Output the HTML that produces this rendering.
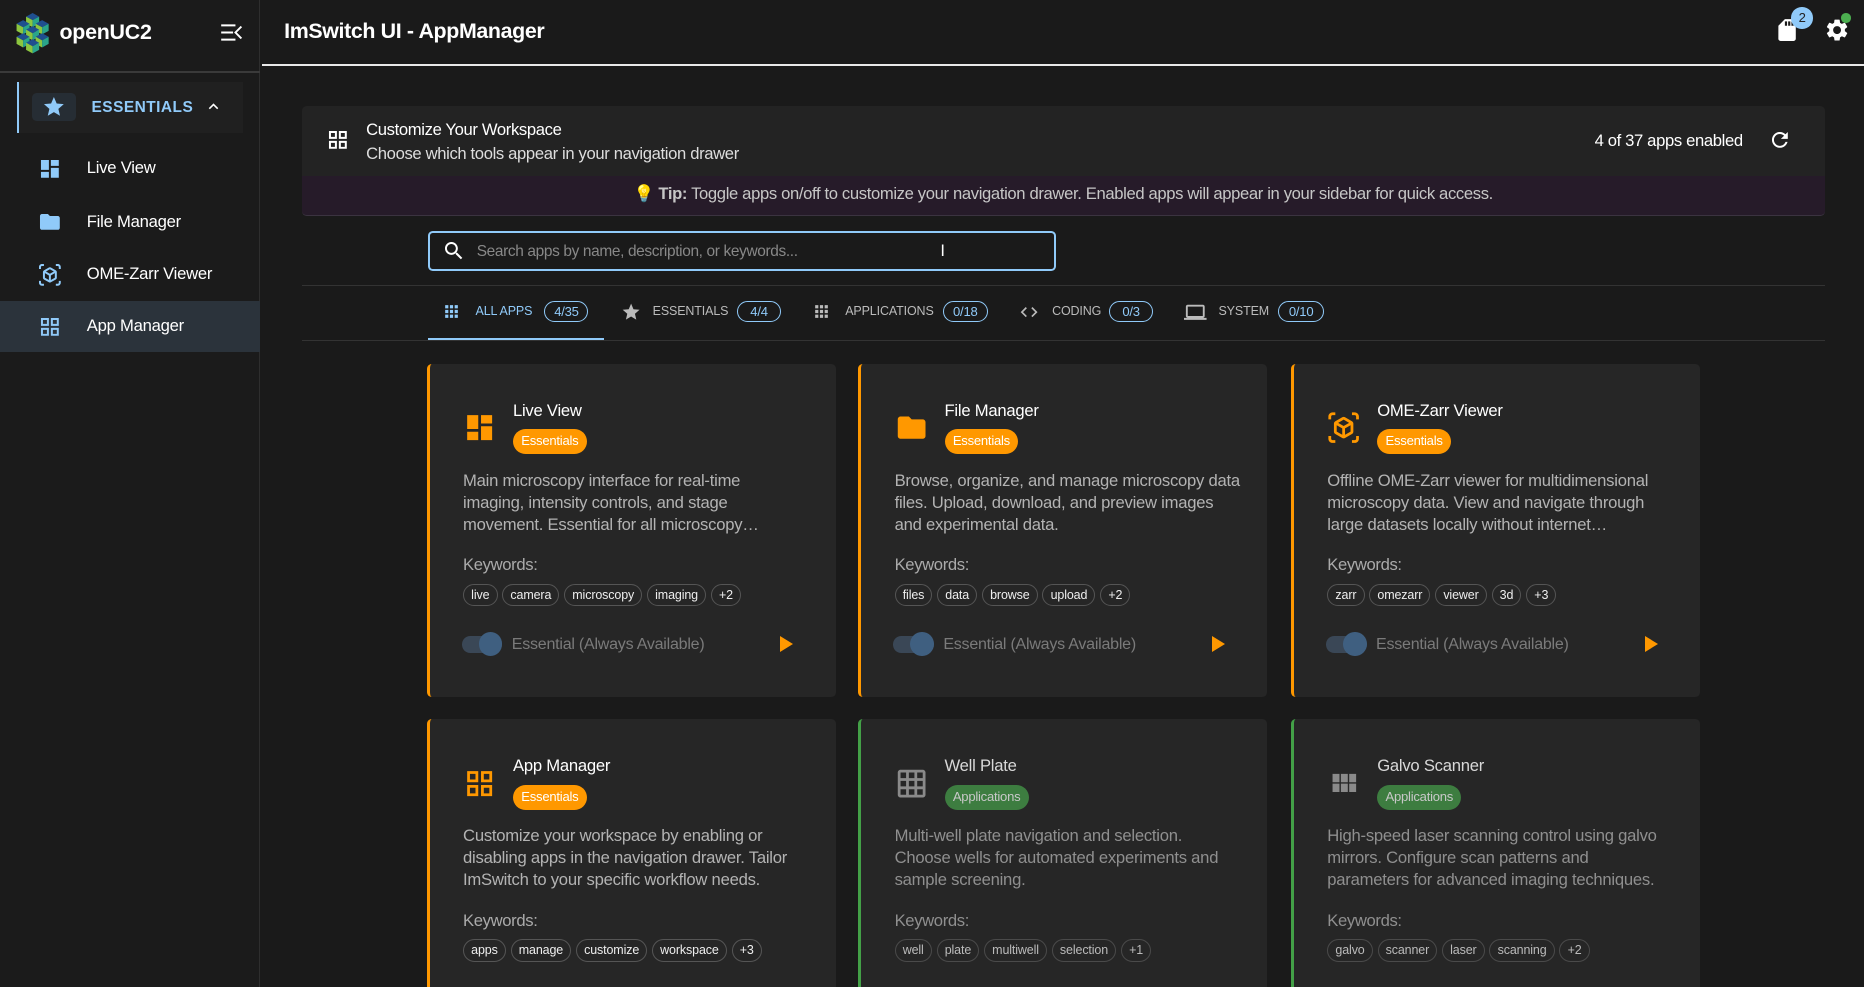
<!DOCTYPE html>
<html><head><meta charset="utf-8">
<style>
*{box-sizing:border-box;margin:0;padding:0}
html,body{width:1864px;height:987px;overflow:hidden;background:#1a1a1a}
#root{zoom:1.18878;width:1568px;height:830px;position:relative;font-family:"Liberation Sans",sans-serif;color:#fff;background:#1a1a1a;overflow:hidden;letter-spacing:-0.2px}
.abs{position:absolute}
svg{display:block}
.side{left:0;top:0;width:219px;height:830px;background:#1b1b1b;border-right:1px solid #2e2e2e}
.nav{position:absolute;left:0;width:219px;height:44px}
.nav svg{position:absolute;left:32px;top:13px}
.nav span{position:absolute;left:73px;top:14px;font-size:14px;color:#fff}
.tab{position:absolute;top:253px;font-size:10.5px;color:#bbb;text-transform:uppercase;letter-spacing:-0.1px}
.chip{position:absolute;top:253px;height:18px;border:1px solid #90caf9;border-radius:9px;font-size:11px;color:#90caf9;text-align:center;line-height:16px}
.card{position:absolute;width:344px;height:280px;background:#262626;border-radius:4px;border-left:3px solid #ff9800}
.card .ic{position:absolute;left:28px;top:40px}
.card .t{position:absolute;left:70px;top:31px;font-size:14px;color:#fff}
.card .cat{position:absolute;left:70px;top:55px;height:21px;border-radius:11px;background:#ff9800;color:#fff;font-size:11px;line-height:21px;padding:0 7px}
.card .d{position:absolute;left:28px;top:89px;font-size:14px;line-height:18.5px;color:#b3b3b3;letter-spacing:-0.2px;white-space:nowrap}
.card .k{position:absolute;left:28px;top:161px;font-size:14px;color:#aaa;letter-spacing:-0.3px}
.card .kws{position:absolute;left:28px;top:185px;display:flex;gap:4px}
.card .kws span{height:19px;border:1px solid #555;border-radius:10px;font-size:10.5px;line-height:17px;padding:0 6px;color:#eee;letter-spacing:-0.1px}
.card .tg{position:absolute;left:27px;top:229px;width:34px;height:14px;border-radius:7px;background:#3a4756}
.card .kn{position:absolute;left:41px;top:226px;width:20px;height:20px;border-radius:50%;background:#3f5f80}
.card .al{position:absolute;left:69px;top:228px;font-size:13.5px;color:#7a7a7a;letter-spacing:-0.2px}
.card .pl{position:absolute;left:295px;top:229px;width:0;height:0;border-left:11px solid #ff9800;border-top:7px solid transparent;border-bottom:7px solid transparent}
.card.g{border-left-color:#43a047}
.card.g .cat{background:#3d7d40;color:#c8c8c8}
.card.g .t{color:#d8d8d8}
.card.g .d,.card.g .k{color:#8f8f8f}
.card.g .kws span{color:#bbb;border-color:#4a4a4a}
</style></head><body><div id="root">

<div class="abs side">
  <svg class="abs" style="left:11px;top:11px" width="33" height="35" viewBox="0 0 33 35">
    <defs>
      <g id="cb"><polygon points="5.5,0 11,3 5.5,6 0,3" fill="#1f4f8f"/><polygon points="0,3 5.5,6 5.5,12 0,9" fill="#8cc63f"/><polygon points="11,3 5.5,6 5.5,12 11,9" fill="#2aa58a"/></g>
    </defs>
    <use href="#cb" x="11" y="0"/><use href="#cb" x="3" y="6"/><use href="#cb" x="19" y="6"/><use href="#cb" x="11" y="11"/><use href="#cb" x="3" y="17"/><use href="#cb" x="19" y="17"/><use href="#cb" x="11" y="22"/>
  </svg>
  <div class="abs" style="left:50px;top:17px;font-size:18px;font-weight:bold">openUC2</div>
  <svg class="abs" style="left:185px;top:19px" width="20" height="16" viewBox="0 0 20 16"><path d="M1 2h12M1 8h10M1 14h12M18 3l-5 5 5 5" stroke="#fff" stroke-width="1.6" fill="none"/></svg>
  <div class="abs" style="left:0;top:60px;width:219px;height:1px;background:#3a3a3a"></div>
  <div class="abs" style="left:14px;top:69px;width:190px;height:43px;background:#202020;border-left:2px solid #90caf9"></div>
  <div class="abs" style="left:27px;top:78px;width:37px;height:24px;background:#262d34;border-radius:4px"></div>
  <svg class="abs" style="left:35px;top:80px" width="20" height="20" viewBox="0 0 24 24"><path fill="#90caf9" d="M12 17.27L18.18 21l-1.64-7.03L22 9.24l-7.19-.61L12 2 9.19 8.63 2 9.24l5.46 4.73L5.820 21z"/></svg>
  <div class="abs" style="left:77px;top:83px;font-size:13px;font-weight:bold;color:#90caf9;letter-spacing:.4px">ESSENTIALS</div>
  <svg class="abs" style="left:172px;top:82px" width="16" height="16" viewBox="0 0 24 24"><path fill="#fff" d="M7.41 15.41L12 10.83l4.59 4.58L18 14l-6-6-6 6z"/></svg>

  <div class="nav" style="top:119px"><svg width="20" height="20" viewBox="0 0 24 24"><path fill="#90caf9" d="M3 13h8V3H3v10zm0 8h8v-6H3v6zm10 0h8V11h-8v10zm0-18v6h8V3h-8z"/></svg><span>Live View</span></div>
  <div class="nav" style="top:164px"><svg width="20" height="20" viewBox="0 0 24 24"><path fill="#90caf9" d="M10 4H4c-1.1 0-2 .9-2 2v12c0 1.1.9 2 2 2h16c1.1 0 2-.9 2-2V8c0-1.1-.9-2-2-2h-8l-2-2z"/></svg><span>File Manager</span></div>
  <div class="nav" style="top:208px"><svg width="20" height="20" viewBox="0 0 24 24"><path fill="#90caf9" d="M3 4c0-.55.45-1 1-1h2V1H4C2.34 1 1 2.34 1 4v2h2V4zm0 16v-2H1v2c0 1.66 1.34 3 3 3h2v-2H4c-.55 0-1-.45-1-1zM20 1h-2v2h2c.55 0 1 .45 1 1v2h2V4c0-1.66-1.34-3-3-3zm1 19c0 .55-.45 1-1 1h-2v2h2c1.66 0 3-1.34 3-3v-2h-2v2zm-2-5.13V9.13c0-.72-.38-1.38-1-1.73l-5-2.88c-.31-.18-.65-.27-1-.27s-.69.09-1 .27L6 7.39c-.62.36-1 1.02-1 1.74v5.74c0 .72.38 1.38 1 1.73l5 2.88c.31.18.65.27 1 .27s.69-.09 1-.27l5-2.88c.62-.35 1-1.01 1-1.73zm-8 2.3-4-2.3v-4.63l4 2.33v4.6zm1-6.33L8.04 8.53 12 6.25l3.96 2.28L12 10.84zm5 4.03-4 2.3v-4.6l4-2.33v4.63z"/></svg><span>OME-Zarr Viewer</span></div>
  <div class="nav" style="top:253px;height:43px;background:#2b333b"><svg width="20" height="20" viewBox="0 0 24 24" style="top:12px"><path fill="#90caf9" d="M3 3v8h8V3H3zm6 6H5V5h4v4zm-6 4v8h8v-8H3zm6 6H5v-4h4v4zm4-16v8h8V3h-8zm6 6h-4V5h4v4zm-6 4v8h8v-8h-8zm6 6h-4v-4h4v4z"/></svg><span style="top:13px">App Manager</span></div>
</div>

<div class="abs" style="left:239px;top:16px;font-size:18px;font-weight:bold;letter-spacing:-0.3px">ImSwitch UI - AppManager</div>
<svg class="abs" style="left:1492px;top:14px" width="22" height="22" viewBox="0 0 24 24"><path fill="#fff" d="M18 2h-8L4.02 8 4 20c0 1.1.9 2 2 2h12c1.1 0 2-.9 2-2V4c0-1.1-.9-2-2-2zm-6 6h-2V4h2v4zm3 0h-2V4h2v4zm3 0h-2V4h2v4z"/></svg>
<div class="abs" style="left:1507px;top:6px;width:18px;height:18px;border-radius:50%;background:#90caf9;color:#222;font-size:11px;text-align:center;line-height:18px">2</div>
<svg class="abs" style="left:1534px;top:14px" width="22" height="22" viewBox="0 0 24 24"><path fill="#fff" d="M19.14 12.94c.04-.3.06-.61.06-.94 0-.32-.02-.64-.07-.94l2.03-1.58c.18-.14.23-.41.12-.61l-1.92-3.32c-.12-.22-.37-.29-.59-.22l-2.39.96c-.5-.38-1.03-.7-1.62-.94l-.36-2.54c-.04-.24-.24-.41-.48-.41h-3.84c-.24 0-.43.17-.47.41l-.36 2.54c-.59.24-1.13.57-1.62.94l-2.39-.96c-.22-.08-.47 0-.59.22L2.74 8.87c-.12.21-.08.47.12.61l2.03 1.58c-.05.3-.09.63-.09.94s.02.64.07.94l-2.03 1.58c-.18.14-.23.41-.12.61l1.92 3.32c.12.22.37.29.59.22l2.39-.96c.5.38 1.03.7 1.62.94l.36 2.54c.05.24.24.41.48.41h3.84c.24 0 .44-.17.47-.41l.36-2.54c.59-.24 1.13-.56 1.62-.94l2.39.96c.22.08.47 0 .59-.22l1.92-3.32c.12-.22.07-.47-.12-.61l-2.01-1.58zM12 15.6c-1.98 0-3.6-1.62-3.6-3.6s1.62-3.6 3.6-3.6 3.6 1.62 3.6 3.6-1.62 3.6-3.6 3.6z"/></svg>
<div class="abs" style="left:1549px;top:11px;width:8px;height:8px;border-radius:50%;background:#4caf50"></div>
<div class="abs" style="left:220px;top:54px;width:1348px;height:1.5px;background:#e8e8e8"></div>

<div class="abs" style="left:254px;top:89px;width:1281px;height:59px;background:#232323;border-radius:4px 4px 0 0"></div>
<svg class="abs" style="left:274px;top:108px" width="20" height="20" viewBox="0 0 24 24"><path fill="#fff" d="M3 3v8h8V3H3zm6 6H5V5h4v4zm-6 4v8h8v-8H3zm6 6H5v-4h4v4zm4-16v8h8V3h-8zm6 6h-4V5h4v4zm-6 4v8h8v-8h-8zm6 6h-4v-4h4v4z"/></svg>
<div class="abs" style="left:308px;top:101px;font-size:14px;letter-spacing:-0.3px">Customize Your Workspace</div>
<div class="abs" style="left:308px;top:121px;font-size:14px;color:#ddd;letter-spacing:-0.3px">Choose which tools appear in your navigation drawer</div>
<div class="abs" style="left:1466px;top:110px;font-size:14px;transform:translateX(-100%);white-space:nowrap;letter-spacing:-0.3px">4 of 37 apps enabled</div>
<svg class="abs" style="left:1487px;top:108px" width="20" height="20" viewBox="0 0 24 24"><path fill="#fff" d="M17.65 6.35C16.2 4.9 14.21 4 12 4c-4.42 0-7.99 3.58-7.99 8s3.57 8 7.99 8c3.73 0 6.84-2.55 7.73-6h-2.08c-.82 2.33-3.04 4-5.65 4-3.31 0-6-2.69-6-6s2.69-6 6-6c1.66 0 3.14.69 4.22 1.78L13 11h7V4l-2.35 2.35z"/></svg>
<div class="abs" style="left:254px;top:148px;width:1281px;height:34px;background:#261b29;border-bottom:1px solid #3b3340;border-radius:0 0 4px 4px"></div>
<div class="abs" style="left:254px;top:155px;width:1281px;text-align:center;font-size:14px;color:#c6c6c6;letter-spacing:-0.3px">💡 <b>Tip:</b> Toggle apps on/off to customize your navigation drawer. Enabled apps will appear in your sidebar for quick access.</div>

<div class="abs" style="left:360px;top:194px;width:528px;height:34px;border:2px solid #90caf9;border-radius:4px"></div>
<svg class="abs" style="left:372px;top:201px" width="20" height="20" viewBox="0 0 24 24"><path fill="#fff" d="M15.5 14h-.79l-.28-.27C15.41 12.59 16 11.11 16 9.5 16 5.91 13.09 3 9.5 3S3 5.91 3 9.5 5.91 16 9.5 16c1.61 0 3.09-.59 4.23-1.57l.27.28v.79l5 4.99L20.49 19l-4.99-5zm-6 0C7.01 14 5 11.99 5 9.5S7.01 5 9.5 5 14 7.01 14 9.5 11.99 14 9.5 14z"/></svg>
<div class="abs" style="left:401px;top:204px;font-size:13px;color:#888;letter-spacing:-0.3px">Search apps by name, description, or keywords...</div>
<div class="abs" style="left:791px;top:203px;font-size:14px;color:#fff">I</div>

<div class="abs" style="left:254px;top:240px;width:1281px;height:1px;background:#333"></div>
<div class="abs" style="left:254px;top:286px;width:1281px;height:1px;background:#333"></div>
<div class="abs" style="left:360px;top:284px;width:148px;height:2px;background:#90caf9"></div>

<svg class="abs" style="left:372px;top:254px" width="16" height="16" viewBox="0 0 24 24"><path fill="#90caf9" d="M4 8h4V4H4v4zm6 12h4v-4h-4v4zm-6 0h4v-4H4v4zm0-6h4v-4H4v4zm6 0h4v-4h-4v4zm6-10v4h4V4h-4zm-6 4h4V4h-4v4zm6 6h4v-4h-4v4zm0 6h4v-4h-4v4z"/></svg>
<div class="tab" style="left:400px;top:256px;color:#90caf9">All Apps</div><div class="chip" style="left:458px;width:37px">4/35</div>
<svg class="abs" style="left:522px;top:254px" width="17" height="17" viewBox="0 0 24 24"><path fill="#bbb" d="M12 17.27L18.18 21l-1.64-7.03L22 9.24l-7.19-.61L12 2 9.19 8.63 2 9.24l5.46 4.73L5.82 21z"/></svg>
<div class="tab" style="left:549px;top:256px">Essentials</div><div class="chip" style="left:620px;width:37px">4/4</div>
<svg class="abs" style="left:683px;top:254px" width="16" height="16" viewBox="0 0 24 24"><path fill="#bbb" d="M4 8h4V4H4v4zm6 12h4v-4h-4v4zm-6 0h4v-4H4v4zm0-6h4v-4H4v4zm6 0h4v-4h-4v4zm6-10v4h4V4h-4zm-6 4h4V4h-4v4zm6 6h4v-4h-4v4zm0 6h4v-4h-4v4z"/></svg>
<div class="tab" style="left:711px;top:256px">Applications</div><div class="chip" style="left:793px;width:38px">0/18</div>
<svg class="abs" style="left:857px;top:254px" width="17" height="17" viewBox="0 0 24 24"><path fill="#bbb" d="M9.4 16.6L4.8 12l4.6-4.6L8 6l-6 6 6 6 1.4-1.4zm5.2 0l4.6-4.6-4.6-4.6L16 6l6 6-6 6-1.4-1.4z"/></svg>
<div class="tab" style="left:885px;top:256px">Coding</div><div class="chip" style="left:933px;width:37px">0/3</div>
<svg class="abs" style="left:996px;top:253px" width="19" height="19" viewBox="0 0 24 24"><path fill="#bbb" d="M20 18c1.1 0 1.99-.9 1.99-2L22 6c0-1.1-.9-2-2-2H4c-1.1 0-2 .9-2 2v10c0 1.1.9 2 2 2H0v2h24v-2h-4zM4 6h16v10H4V6z"/></svg>
<div class="tab" style="left:1025px;top:256px">System</div><div class="chip" style="left:1075px;width:39px">0/10</div>

<!-- Row 1 -->
<div class="card" style="left:359px;top:306px">
  <svg class="ic" width="28" height="28" viewBox="0 0 24 24"><path fill="#ff9800" d="M3 13h8V3H3v10zm0 8h8v-6H3v6zm10 0h8V11h-8v10zm0-18v6h8V3h-8z"/></svg>
  <div class="t">Live View</div><div class="cat">Essentials</div>
  <div class="d">Main microscopy interface for real-time<br>imaging, intensity controls, and stage<br>movement. Essential for all microscopy…</div>
  <div class="k">Keywords:</div>
  <div class="kws"><span>live</span><span>camera</span><span>microscopy</span><span>imaging</span><span>+2</span></div>
  <div class="tg"></div><div class="kn"></div><div class="al">Essential (Always Available)</div><div class="pl"></div>
</div>
<div class="card" style="left:722px;top:306px">
  <svg class="ic" width="28" height="28" viewBox="0 0 24 24"><path fill="#ff9800" d="M10 4H4c-1.1 0-2 .9-2 2v12c0 1.1.9 2 2 2h16c1.1 0 2-.9 2-2V8c0-1.1-.9-2-2-2h-8l-2-2z"/></svg>
  <div class="t">File Manager</div><div class="cat">Essentials</div>
  <div class="d">Browse, organize, and manage microscopy data<br>files. Upload, download, and preview images<br>and experimental data.</div>
  <div class="k">Keywords:</div>
  <div class="kws"><span>files</span><span>data</span><span>browse</span><span>upload</span><span>+2</span></div>
  <div class="tg"></div><div class="kn"></div><div class="al">Essential (Always Available)</div><div class="pl"></div>
</div>
<div class="card" style="left:1086px;top:306px">
  <svg class="ic" width="28" height="28" viewBox="0 0 24 24"><path fill="#ff9800" d="M3 4c0-.55.45-1 1-1h2V1H4C2.34 1 1 2.34 1 4v2h2V4zm0 16v-2H1v2c0 1.66 1.34 3 3 3h2v-2H4c-.55 0-1-.45-1-1zM20 1h-2v2h2c.55 0 1 .45 1 1v2h2V4c0-1.66-1.34-3-3-3zm1 19c0 .55-.45 1-1 1h-2v2h2c1.66 0 3-1.34 3-3v-2h-2v2zm-2-5.13V9.13c0-.72-.38-1.38-1-1.73l-5-2.88c-.31-.18-.65-.27-1-.27s-.69.09-1 .27L6 7.39c-.62.36-1 1.02-1 1.74v5.74c0 .72.38 1.38 1 1.73l5 2.88c.31.18.65.27 1 .27s.69-.09 1-.27l5-2.88c.62-.35 1-1.01 1-1.73zm-8 2.3-4-2.3v-4.63l4 2.33v4.6zm1-6.33L8.04 8.53 12 6.25l3.96 2.28L12 10.84zm5 4.03-4 2.3v-4.6l4-2.33v4.63z"/></svg>
  <div class="t">OME-Zarr Viewer</div><div class="cat">Essentials</div>
  <div class="d">Offline OME-Zarr viewer for multidimensional<br>microscopy data. View and navigate through<br>large datasets locally without internet…</div>
  <div class="k">Keywords:</div>
  <div class="kws"><span>zarr</span><span>omezarr</span><span>viewer</span><span>3d</span><span>+3</span></div>
  <div class="tg"></div><div class="kn"></div><div class="al">Essential (Always Available)</div><div class="pl"></div>
</div>

<!-- Row 2 -->
<div class="card" style="left:359px;top:605px">
  <svg class="ic" width="28" height="28" viewBox="0 0 24 24"><path fill="#ff9800" d="M3 3v8h8V3H3zm6 6H5V5h4v4zm-6 4v8h8v-8H3zm6 6H5v-4h4v4zm4-16v8h8V3h-8zm6 6h-4V5h4v4zm-6 4v8h8v-8h-8zm6 6h-4v-4h4v4z"/></svg>
  <div class="t">App Manager</div><div class="cat">Essentials</div>
  <div class="d">Customize your workspace by enabling or<br>disabling apps in the navigation drawer. Tailor<br>ImSwitch to your specific workflow needs.</div>
  <div class="k">Keywords:</div>
  <div class="kws"><span>apps</span><span>manage</span><span>customize</span><span>workspace</span><span>+3</span></div>
</div>
<div class="card g" style="left:722px;top:605px">
  <svg class="ic" width="28" height="28" viewBox="0 0 24 24"><path fill="#8a8a8a" d="M20 2H4c-1.1 0-2 .9-2 2v16c0 1.1.9 2 2 2h16c1.1 0 2-.9 2-2V4c0-1.1-.9-2-2-2zM8 20H4v-4h4v4zm0-6H4v-4h4v4zm0-6H4V4h4v4zm6 12h-4v-4h4v4zm0-6h-4v-4h4v4zm0-6h-4V4h4v4zm6 12h-4v-4h4v4zm0-6h-4v-4h4v4zm0-6h-4V4h4v4z"/></svg>
  <div class="t">Well Plate</div><div class="cat">Applications</div>
  <div class="d">Multi-well plate navigation and selection.<br>Choose wells for automated experiments and<br>sample screening.</div>
  <div class="k">Keywords:</div>
  <div class="kws"><span>well</span><span>plate</span><span>multiwell</span><span>selection</span><span>+1</span></div>
</div>
<div class="card g" style="left:1086px;top:605px">
  <svg class="ic" width="28" height="28" viewBox="0 0 24 24"><path fill="#8a8a8a" d="M4 11h5V5H4v6zm0 7h5v-6H4v6zm6 0h5v-6h-5v6zm6 0h5v-6h-5v6zm-6-7h5V5h-5v6zm6-6v6h5V5h-5z"/></svg>
  <div class="t">Galvo Scanner</div><div class="cat">Applications</div>
  <div class="d">High-speed laser scanning control using galvo<br>mirrors. Configure scan patterns and<br>parameters for advanced imaging techniques.</div>
  <div class="k">Keywords:</div>
  <div class="kws"><span>galvo</span><span>scanner</span><span>laser</span><span>scanning</span><span>+2</span></div>
</div>

</div></body></html>
